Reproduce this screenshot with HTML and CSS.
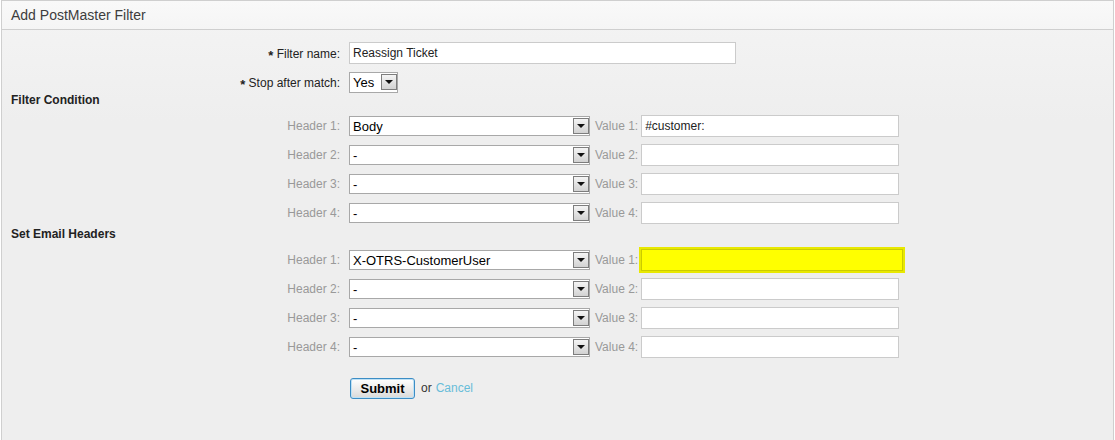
FILE: index.html
```html
<!DOCTYPE html>
<html lang="en">
<head>
    <meta charset="UTF-8">
    <title>Add PostMaster Filter</title>
    <link rel="stylesheet" href="styles.css">
</head>
<body>

<div class="box">
    <div class="box-header">
        <h2>Add PostMaster Filter</h2>
    </div>
    <div class="box-content">
        <div class="row first">
            <label class="field-label req"><span class="star">*</span> Filter name:</label>
            <input type="text" class="name-input" value="Reassign Ticket">
        </div>
        <div class="row">
            <label class="field-label req"><span class="star">*</span> Stop after match:</label>
            <div class="select small"><span class="select-text">Yes</span><span class="arrow"></span></div>
        </div>

        <h3 class="section">Filter Condition</h3>
        <div class="row group-first">
            <label class="field-label">Header 1:</label>
            <div class="select"><span class="select-text">Body</span><span class="arrow"></span></div>
            <label class="value-label">Value 1:</label>
            <input type="text" class="value-input" value="#customer:">
        </div>
        <div class="row">
            <label class="field-label">Header 2:</label>
            <div class="select"><span class="select-text">-</span><span class="arrow"></span></div>
            <label class="value-label">Value 2:</label>
            <input type="text" class="value-input">
        </div>
        <div class="row">
            <label class="field-label">Header 3:</label>
            <div class="select"><span class="select-text">-</span><span class="arrow"></span></div>
            <label class="value-label">Value 3:</label>
            <input type="text" class="value-input">
        </div>
        <div class="row">
            <label class="field-label">Header 4:</label>
            <div class="select"><span class="select-text">-</span><span class="arrow"></span></div>
            <label class="value-label">Value 4:</label>
            <input type="text" class="value-input">
        </div>

        <h3 class="section second">Set Email Headers</h3>
        <div class="row group-first">
            <label class="field-label">Header 1:</label>
            <div class="select"><span class="select-text">X-OTRS-CustomerUser</span><span class="arrow"></span></div>
            <label class="value-label">Value 1:</label>
            <input type="text" class="value-input highlight">
        </div>
        <div class="row">
            <label class="field-label">Header 2:</label>
            <div class="select"><span class="select-text">-</span><span class="arrow"></span></div>
            <label class="value-label">Value 2:</label>
            <input type="text" class="value-input">
        </div>
        <div class="row">
            <label class="field-label">Header 3:</label>
            <div class="select"><span class="select-text">-</span><span class="arrow"></span></div>
            <label class="value-label">Value 3:</label>
            <input type="text" class="value-input">
        </div>
        <div class="row">
            <label class="field-label">Header 4:</label>
            <div class="select"><span class="select-text">-</span><span class="arrow"></span></div>
            <label class="value-label">Value 4:</label>
            <input type="text" class="value-input">
        </div>

        <div class="row actions">
            <span class="field-label"></span>
            <button class="submit-btn">Submit</button>
            <span class="or">or</span>
            <a href="#" class="cancel-link">Cancel</a>
        </div>
    </div>
</div>

</body>
</html>
```

FILE: styles.css
```css
/* Base */
body {
    font-family: "Liberation Sans", Arial, sans-serif;
    font-size: 12px;
    color: #333;
    margin: 0;
    padding: 0;
    background-color: #fff;
}

.box {
    margin: 0 1px;
    border: 1px solid #cfcfcf;
    border-bottom: none;
    height: 460px;
    background: linear-gradient(#f4f4f4, #eeeeee 120px);
}

.box-header {
    height: 28px;
    border-bottom: 1px solid #cfcfcf;
    background: linear-gradient(#f9f9f9, #f5f5f5);
}

.box-header h2 {
    margin: 0;
    padding-left: 9px;
    font-size: 14px;
    font-weight: normal;
    line-height: 28px;
    color: #3d3d3d;
}

.box-content {
    padding-top: 12px;
}

.row {
    display: flex;
    align-items: center;
    height: 22px;
    margin-top: 7px;
}

.row.first {
    margin-top: 0;
}

.row.group-first {
    margin-top: 8px;
}

.row.actions {
    margin-top: 19px;
}

.field-label {
    width: 338px;
    flex-shrink: 0;
    text-align: right;
    margin-right: 9px;
    color: #999;
}

.field-label.req {
    color: #222;
}

.star {
    font-weight: bold;
    font-size: 13px;
    position: relative;
    top: 2px;
}

.section {
    margin: 0;
    padding-left: 9px;
    font-size: 12px;
    line-height: 14px;
    color: #222;
}

.section.second {
    margin-top: 3px;
}

input[type="text"] {
    font-family: "Liberation Sans", Arial, sans-serif;
    font-size: 12px;
    color: #222;
    box-sizing: border-box;
    height: 22px;
    border: 1px solid #cbcbcb;
    background-color: #fff;
    padding: 0 3px;
    margin: 0;
    outline: none;
}

.name-input {
    width: 387px;
    color: #333;
}

.value-input {
    width: 258px;
}

.value-input.highlight {
    width: 262px;
    background-color: #ffff00;
    border-color: #cccc00;
    box-shadow: 0 0 0 2px #e8e800;
}

.select {
    box-sizing: border-box;
    width: 241px;
    height: 20px;
    border: 1px solid #a8a8a8;
    background-color: #fff;
    display: flex;
    align-items: center;
    justify-content: space-between;
    font-size: 13px;
    color: #000;
}

.select.small {
    width: 49px;
    height: 21px;
}

.select-text {
    padding-left: 3px;
}

.arrow {
    width: 16px;
    height: 16px;
    margin-right: 0;
    box-sizing: border-box;
    border: 1px solid #7d7d7d;
    background: linear-gradient(#f4f4f4, #d2d2d2);
    position: relative;
}

.arrow::after {
    content: "";
    position: absolute;
    left: 3px;
    top: 5px;
    border-left: 4px solid transparent;
    border-right: 4px solid transparent;
    border-top: 4px solid #111;
}

.value-label {
    color: #999;
    margin-left: 5px;
    margin-right: 3px;
    white-space: nowrap;
}

.submit-btn {
    font-family: "Liberation Sans", Arial, sans-serif;
    font-size: 13px;
    font-weight: bold;
    color: #000;
    width: 65px;
    height: 21px;
    margin-left: 1px;
    padding: 0;
    border: 1px solid #3c8dc5;
    border-radius: 3px;
    background: linear-gradient(#ffffff, #e9e9e9 60%, #d9d9d9);
    box-shadow: inset 0 0 0 1px #bfe1f5;
    cursor: pointer;
}

.or {
    margin-left: 6px;
    color: #333;
}

.cancel-link {
    margin-left: 4px;
    color: #68bdd9;
    text-decoration: none;
}
```
